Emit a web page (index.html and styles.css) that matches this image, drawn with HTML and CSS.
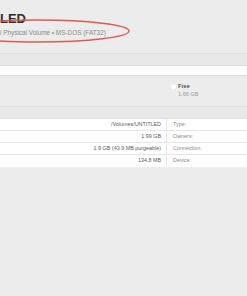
FILE: index.html
```html
<!DOCTYPE html>
<html lang="en">
<head>
  <meta charset="UTF-8">
  <title>Disk Utility</title>
  <link rel="stylesheet" href="styles.css">
</head>
<body>
  <div class="window">
    <header class="volume-head">
      <h1 class="volume-name">LED</h1>
      <p class="volume-sub">l Physical Volume • MS-DOS (FAT32)</p>
      <svg class="mark" width="140" height="34" viewBox="0 0 140 34">
        <ellipse cx="38" cy="17" rx="91" ry="11" fill="none" stroke="#de5a50" stroke-width="1.4"/>
      </svg>
    </header>
    <div class="band"></div>
    <div class="bar-row"></div>
    <div class="usage">
      <div class="legend">
        <span class="dot"></span>
        <div>
          <div class="legend-title">Free</div>
          <div class="legend-size">1.66 GB</div>
        </div>
      </div>
    </div>
    <div class="band"></div>
    <div class="info">
      <div class="info-row">
        <div class="val">/Volumes/UNTITLED</div>
        <div class="key">Type:</div>
      </div>
      <div class="info-row">
        <div class="val">1.99 GB</div>
        <div class="key">Owners:</div>
      </div>
      <div class="info-row">
        <div class="val">1.9 GB (43.9 MB purgeable)</div>
        <div class="key">Connection:</div>
      </div>
      <div class="info-row">
        <div class="val">134.8 MB</div>
        <div class="key">Device:</div>
      </div>
    </div>
  </div>
</body>
</html>
```

FILE: styles.css
```css
body { margin: 0; background: #ececec; font-family: 'Liberation Sans', Arial, sans-serif; }
.window { width: 247px; height: 296px; overflow: hidden; background: #ececec; }

.volume-head { position: relative; height: 53px; padding: 13px 0 0 0; box-sizing: border-box; }
.volume-name { margin: 0; font-size: 13px; line-height: 12px; font-weight: bold; color: #2e2e2e; }
.volume-sub { margin: 4px 0 0 0; font-size: 6.4px; line-height: 8px; color: #8a8a8a; }
.mark { position: absolute; left: 0; top: 14px; }

.band { height: 12px; background: #e8e8e8; border-top: 1px solid #dedede; box-sizing: border-box; }
.bar-row { height: 11px; background: #fff; border-top: 1px solid #e0e0e0; border-bottom: 1px solid #dcdcdc; box-sizing: border-box; }
.usage { height: 30px; padding: 7px 0 0 171px; box-sizing: border-box; }
.legend { display: flex; gap: 2px; }
.dot { width: 5px; height: 5px; margin-top: 1px; border-radius: 50%; background: #fff; }
.legend-title { font-size: 5.6px; line-height: 7px; font-weight: bold; color: #555; }
.legend-size { font-size: 5.6px; line-height: 9px; color: #9a9a9a; }

.info { background: #fff; border-top: 1px solid #dedede; }
.info-row { display: grid; grid-template-columns: 167px 1fr; height: 12px; border-bottom: 1px solid #e6e6e6; box-sizing: border-box; font-size: 5.4px; line-height: 11px; }
.info-row:last-child { border-bottom: none; }
.val { text-align: right; padding-right: 5px; color: #5a5a5a; border-right: 1px solid #e6e6e6; }
.key { padding-left: 6px; color: #8a8a8a; }
```
